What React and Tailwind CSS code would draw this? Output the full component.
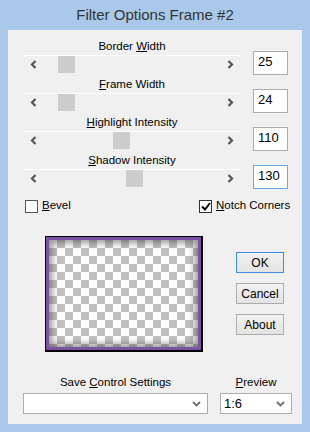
import React from 'react';

const font = { fontFamily: '"Liberation Sans", Arial, sans-serif' };

function Chevron({ dir }) {
    const d = dir === 'left' ? 'M5.5 1 L2 4.5 L5.5 8' : 'M1.5 1 L5 4.5 L1.5 8';
    return (
        <svg width="7" height="9" viewBox="0 0 7 9">
            <path d={d} fill="none" stroke="#555555" strokeWidth="2.2" />
        </svg>
    );
}

function Caret() {
    return (
        <svg width="9" height="6" viewBox="0 0 9 6">
            <path d="M1 1 L4.5 4.5 L8 1" fill="none" stroke="#707070" strokeWidth="1.8" />
        </svg>
    );
}

function Slider({ label, hot, thumb, value, focused }) {
    const [before, after] = label.split(hot);
    return (
        <div className="flex h-[38px]">
            <div className="ml-[16px] flex w-[216px] flex-col">
                <div className="h-[17px] text-center text-[11.5px] leading-[17px] text-black">
                    {before}
                    <span className="underline">{hot}</span>
                    {after}
                </div>
                <div className="relative flex h-[18px] items-center justify-between border-t border-white px-[6px]">
                    <Chevron dir="left" />
                    <div
                        className="absolute top-0 h-[17px] w-[17px] bg-[#cdcdcd]"
                        style={{ left: thumb }}
                    />
                    <Chevron dir="right" />
                </div>
            </div>
            <div
                className={`ml-[13px] mt-[13px] h-[24px] w-[35px] border bg-white pl-[4px] text-[13px] leading-[20px] text-black ${
                    focused ? 'border-[#6aa7e4]' : 'border-[#acacac]'
                }`}
            >
                {value}
            </div>
        </div>
    );
}

function Button({ children, primary }) {
    return (
        <div
            className={`flex h-[21px] w-[48px] items-center justify-center border bg-gradient-to-b from-[#f2f2f2] to-[#e3e3e3] text-[12px] text-black ${
                primary ? 'border-[#3c8fe3]' : 'border-[#acacac]'
            }`}
        >
            {children}
        </div>
    );
}

export default function App() {
    return (
        <div className="flex h-[432px] w-[310px] flex-col bg-[#aac9ea]" style={font}>
            <div className="flex h-[30px] items-center justify-center text-[15px] text-[#333333]">
                Filter Options Frame #2
            </div>
            <div className="mx-[8px] mb-[8px] flex flex-1 flex-col bg-[#f0f0f0] pt-[8px]">
                <Slider label="Border Width" hot="W" thumb="34px" value="25" />
                <Slider label="Frame Width" hot="F" thumb="34px" value="24" />
                <Slider label="Highlight Intensity" hot="H" thumb="89px" value="110" />
                <Slider label="Shadow Intensity" hot="S" thumb="102px" value="130" focused />

                <div className="mt-[9px] flex h-[14px] items-center whitespace-nowrap text-[11.5px] text-black">
                    <div className="ml-[17px] flex w-[174px] items-center">
                        <div className="h-[13px] w-[13px] border border-[#555555] bg-white" />
                        <span className="ml-[4px]">
                            <span className="underline">B</span>evel
                        </span>
                    </div>
                    <div className="flex items-center">
                        <div className="flex h-[13px] w-[13px] items-center justify-center border border-[#333333] bg-white">
                            <svg width="10" height="9" viewBox="0 0 10 9">
                                <path d="M1 4.5 L4 7.5 L9 1" fill="none" stroke="#000" strokeWidth="2" />
                            </svg>
                        </div>
                        <span className="ml-[4px]">
                            <span className="underline">N</span>otch Corners
                        </span>
                    </div>
                </div>

                <div className="mt-[23px] flex">
                    <div className="ml-[37px] h-[116px] w-[158px] border-b-2 border-l border-r-2 border-t border-black">
                        <div className="h-full w-full border-[3px] border-[#7c50a3]">
                            <div className="h-full w-full bg-[repeating-conic-gradient(#c0c0c0_0_25%,#ffffff_0_50%)] bg-[length:16px_16px] shadow-[inset_0_0_7px_3px_rgba(60,60,60,0.55)]" />
                        </div>
                    </div>
                    <div className="ml-[33px] mt-[16px] flex flex-col gap-[10px]">
                        <Button primary>OK</Button>
                        <Button>Cancel</Button>
                        <Button>About</Button>
                    </div>
                </div>

                <div className="mt-[22px] flex text-[11.5px] text-black">
                    <div className="ml-[15px] flex w-[185px] flex-col">
                        <div className="h-[16px] text-center leading-[16px]">
                            Save <span className="underline">C</span>ontrol Settings
                        </div>
                        <div className="mt-[3px] flex h-[21px] items-center justify-end border border-[#acacac] bg-white pr-[6px]">
                            <Caret />
                        </div>
                    </div>
                    <div className="ml-[12px] flex w-[72px] flex-col">
                        <div className="h-[16px] text-center leading-[16px]">
                            <span className="underline">P</span>review
                        </div>
                        <div className="mt-[3px] flex h-[21px] items-center justify-between border border-[#acacac] bg-white pl-[3px] pr-[6px] text-[13px]">
                            <span>1:6</span>
                            <Caret />
                        </div>
                    </div>
                </div>
            </div>
        </div>
    );
}
